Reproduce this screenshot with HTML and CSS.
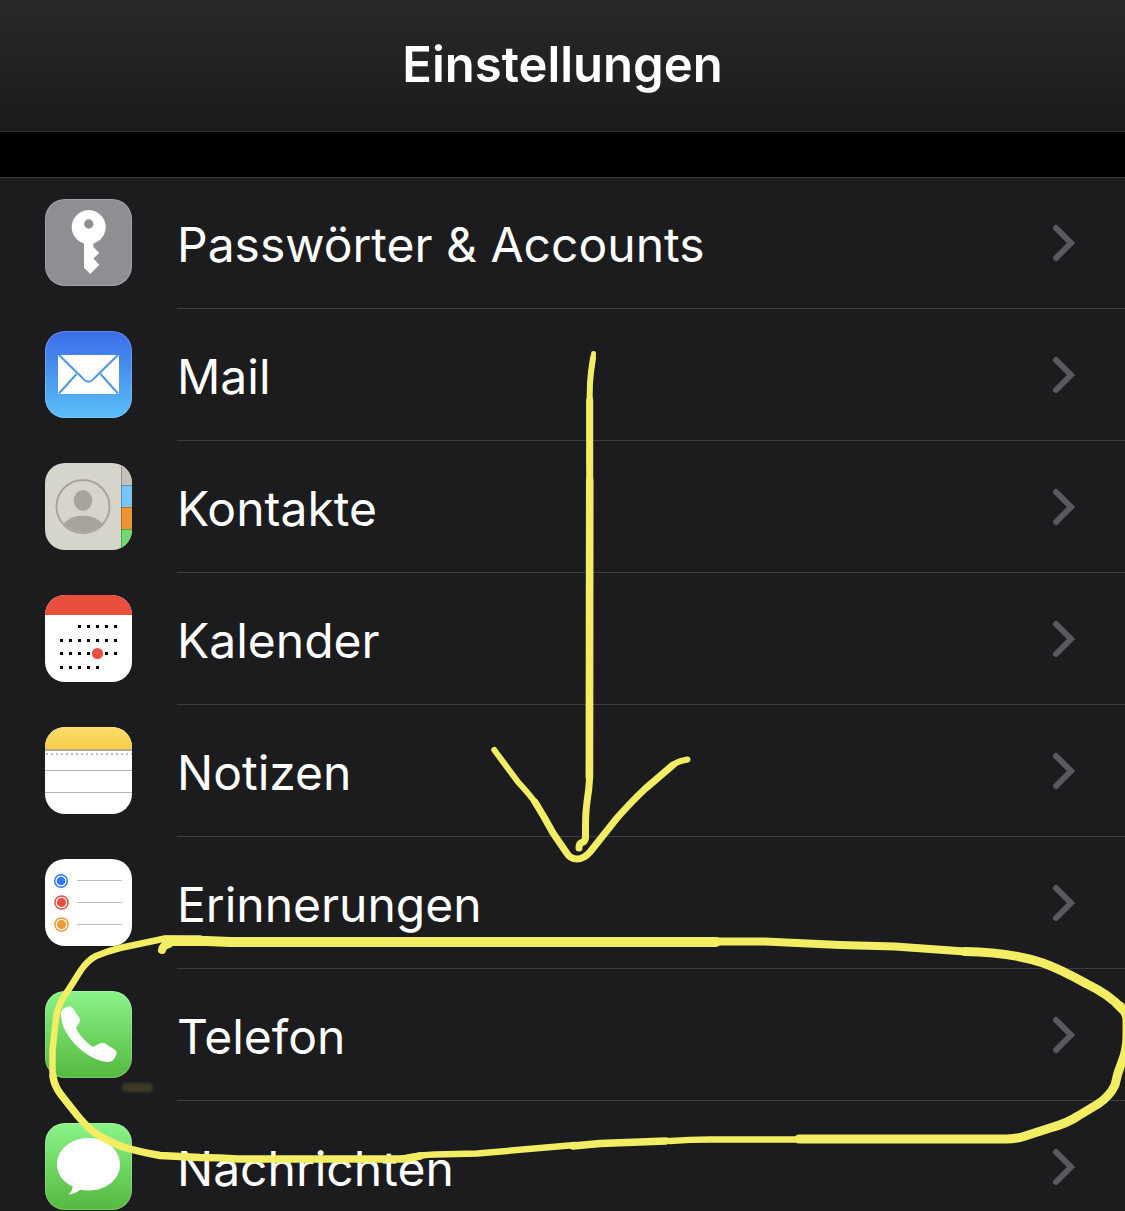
FILE: index.html
```html
<!DOCTYPE html>
<html lang="de">
<head>
<meta charset="utf-8">
<meta name="viewport" content="width=device-width, initial-scale=1">
<title>Einstellungen</title>
<link rel="stylesheet" href="styles.css">
</head>
<body>
<header class="navbar"><h1 class="navbar-title">Einstellungen</h1></header>
<main class="content">
<ul class="settings">
<li class="row"><a class="row-link" href="#passwoerter">
<svg class="app-icon icon-key" viewBox="0 0 87 87" aria-hidden="true"><path fill="#fff" fill-rule="evenodd" d="M39 44.400A17 17 0 1 1 48.4 44.400V48L54.3 54L48.4 59.5L54.3 65.7L45.3 75L39 68.7ZM43.8 20.3a4.7 4.7 0 1 0 0 9.4a4.7 4.7 0 1 0 0-9.4Z"/></svg>
<span class="row-body"><span class="label">Passwörter &amp; Accounts</span><svg class="chevron" viewBox="0 0 24 38" aria-hidden="true"><path d="M4 4L19 19L4 34"/></svg></span></a></li>
<li class="row"><a class="row-link" href="#mail">
<svg class="app-icon icon-mail" viewBox="0 0 87 87" aria-hidden="true"><rect x="13" y="24" width="61" height="39" rx="1" fill="#fff"/><path fill="none" stroke="#4d95e6" stroke-width="2" d="M14 24L37 46.500Q43.500 55 50 46.500L73 24M31.500 43L14 62.500M55.500 43L73 62.500"/></svg>
<span class="row-body"><span class="label">Mail</span><svg class="chevron" viewBox="0 0 24 38" aria-hidden="true"><path d="M4 4L19 19L4 34"/></svg></span></a></li>
<li class="row"><a class="row-link" href="#kontakte">
<svg class="app-icon icon-contacts" viewBox="0 0 87 87" aria-hidden="true"><rect x="76" width="11" height="22" fill="#c4c1b8"/><rect x="76" y="22" width="11" height="22" fill="#75c5f8"/><rect x="76" y="44" width="11" height="22" fill="#ee9433"/><rect x="76" y="66" width="11" height="21" fill="#72d872"/><path d="M76.500 0V87M76 22.500H87M76 44.500H87M76 66.500H87" stroke="#000" stroke-opacity=".25"/><circle cx="38" cy="43.500" r="26.500" fill="none" stroke="#a8a49d" stroke-width="2"/><ellipse cx="38" cy="37.500" rx="9.300" ry="10.400" fill="#a8a49d"/><path d="M18.500 60.500Q26 52.500 38 52.500T57.500 60.500A26.500 26.500 0 0 1 18.500 60.500Z" fill="#a8a49d"/></svg>
<span class="row-body"><span class="label">Kontakte</span><svg class="chevron" viewBox="0 0 24 38" aria-hidden="true"><path d="M4 4L19 19L4 34"/></svg></span></a></li>
<li class="row"><a class="row-link" href="#kalender">
<svg class="app-icon icon-calendar" viewBox="0 0 87 87" aria-hidden="true"><rect width="87" height="20" fill="#ea4e3d"/><path stroke="#000" stroke-width="3" stroke-dasharray="3 6" d="M33 31.500H72M15 45.500H72M15 58.500H72M15 72.500H54"/><circle cx="52.500" cy="58.500" r="5.600" fill="#ea4e3d"/></svg>
<span class="row-body"><span class="label">Kalender</span><svg class="chevron" viewBox="0 0 24 38" aria-hidden="true"><path d="M4 4L19 19L4 34"/></svg></span></a></li>
<li class="row"><a class="row-link" href="#notizen">
<svg class="app-icon icon-notes" viewBox="0 0 87 87" aria-hidden="true"><defs><linearGradient id="notes" x2="0" y2="1"><stop stop-color="#fbdc6c"/><stop offset="1" stop-color="#f6cd45"/></linearGradient></defs><rect width="87" height="22" fill="url(#notes)"/><path stroke="#b5aa8e" stroke-width="2" d="M0 23H87"/><path stroke="#bbb" stroke-width="2" stroke-dasharray="2 3" d="M1 27H87"/><path stroke="#b4b4b4" d="M0 43.500H87M0 65.500H87"/></svg>
<span class="row-body"><span class="label">Notizen</span><svg class="chevron" viewBox="0 0 24 38" aria-hidden="true"><path d="M4 4L19 19L4 34"/></svg></span></a></li>
<li class="row"><a class="row-link" href="#erinnerungen">
<svg class="app-icon icon-reminders" viewBox="0 0 87 87" aria-hidden="true"><g stroke-width="1.500"><circle cx="16" cy="22" r="6.300" fill="none" stroke="#3478f6"/><circle cx="16" cy="22" r="4.300" fill="#3478f6"/><circle cx="16.500" cy="43.500" r="6.600" fill="none" stroke="#e5503f"/><circle cx="16.500" cy="43.500" r="4.500" fill="#e5503f"/><circle cx="16.500" cy="65.500" r="6.600" fill="none" stroke="#ef9a37"/><circle cx="16.500" cy="65.500" r="4.500" fill="#ef9a37"/></g><path stroke="#c0c0c2" d="M32 21.500H77M32 43.500H77M32 65.500H77"/></svg>
<span class="row-body"><span class="label">Erinnerungen</span><svg class="chevron" viewBox="0 0 24 38" aria-hidden="true"><path d="M4 4L19 19L4 34"/></svg></span></a></li>
<li class="row"><a class="row-link" href="#telefon">
<svg class="app-icon icon-phone" viewBox="0 0 87 87" aria-hidden="true"><path fill="#fff" d="M16 23Q16 19 19.500 17L23 15.500Q26 14.500 28 17.500L34 26.500Q35.500 29 34.500 31L31.500 36Q31 37.500 31.800 39Q38 49 46.500 55Q48 56 49.500 55.300L55 52.300Q57.500 51 60 52.500L69.500 58.500Q72.500 60.500 71.500 63L69.500 67.500Q67 71 62 71Q51 70 38 60.500Q24 49 19 37Q16 30 16 23Z"/></svg>
<span class="row-body"><span class="label">Telefon</span><svg class="chevron" viewBox="0 0 24 38" aria-hidden="true"><path d="M4 4L19 19L4 34"/></svg></span></a></li>
<li class="row"><a class="row-link" href="#nachrichten">
<svg class="app-icon icon-messages" viewBox="0 0 87 87" aria-hidden="true"><path fill="#fff" d="M43.500 15C61 15 75 26.500 75 41.500S61 67.500 43.500 67.500Q39 67.500 35.500 66.500Q30 71 23.500 71.500Q27.500 67.500 27.800 63.500C18 59 12 51 12 41.500C12 26.500 26 15 43.500 15Z"/></svg>
<span class="row-body"><span class="label">Nachrichten</span><svg class="chevron" viewBox="0 0 24 38" aria-hidden="true"><path d="M4 4L19 19L4 34"/></svg></span></a></li>
</ul>
</main>
<!-- Hand-drawn marks: arrow down the list, loop round the Telefon row -->
<svg class="marker" viewBox="0 0 1125 1211" aria-hidden="true">
<rect class="smudge" x="122" y="1083" width="31" height="9" rx="4"/>
<g class="ink">
<path stroke-width="5" d="M593.500 353.500L591 372"/>
<path stroke-width="6" d="M593 358L591 372Q589.700 382 589.700 395V470"/>
<path stroke-width="7" d="M589.700 400V777Q589 790 587 802Q585.500 812 585.500 825V838Q585 842 581 843Q579 844 579 848"/>
<path stroke-width="7.500" d="M589.700 480L589.300 777"/>
<path stroke-width="6" d="M494.300 750L518 782Q531 796 537 805L553 833"/>
<path stroke-width="7" d="M535 802Q545 818 553 833L566 852Q570 859 577 859T590 852L617 818Q633 800 646 788L673 765"/>
<path stroke-width="6" d="M646 788L673 765Q677 762 681 761L687.500 759.500"/>
<path stroke-width="8" d="M162 950Q163 945 169 944"/>
<path stroke-width="8" d="M166 939.500L206 940.500"/>
<path stroke-width="10" d="M170 941H206L230 942H716"/>
<path stroke-width="8" d="M716 941.500H765Q800 943 840 945L895 946.500L965 951.500"/>
<path stroke-width="9" d="M965 951.500Q1010 952 1043 963Q1060 969 1087 984Q1110 995 1122 1009"/>
<path stroke-width="9" d="M1120 1006Q1127 1013 1127 1020V1035Q1127 1050 1122 1062T1115 1085Q1110 1096 1098 1104L1078 1116Q1068 1123 1050 1128L1022 1137Q1015 1139 1007 1139H799"/>
<path stroke-width="6.500" d="M800 1139.500H710Q690 1139.500 670 1141"/>
<path stroke-width="7.500" d="M666 1141L600 1143.500L573 1146"/>
<path stroke-width="6.500" d="M575 1145L477 1153.500L435 1154.500Q420 1155 408 1157.500"/>
<path stroke-width="7.500" d="M420 1156Q408 1159 398 1159H238Q220 1157.500 200 1157.500L160 1155.500Q145 1153 130 1149Q115 1145 100 1136Q90 1131 77 1115L62 1096Q54 1086 53 1076"/>
<path stroke-width="6.500" d="M77 1115L62 1096Q53 1086 52.500 1072V1050L56 1018Q58 1003 69 989L81 970Q88 960 96 956Q108 951 120 948L165 938.500H200"/>
</g>
</svg>
</body>
</html>
```
FILE: styles.css
```css
* { box-sizing: border-box; }

body {
  position: relative;
  display: flex;
  flex-direction: column;
  height: 100vh;
  margin: 0;
  overflow: hidden;
  background: #000;
  color: #fff;
  font-family: Inter, "Liberation Sans", sans-serif;
}

.navbar {
  display: flex;
  flex: none;
  align-items: center;
  justify-content: center;
  padding: 35px 16px 36px;
  border-bottom: 1px solid #2f2f31;
  background: linear-gradient(#29292b, #1b1b1b);
}

.navbar-title {
  margin: 0;
  font-size: 49px;
  font-weight: 600;
  line-height: 60px;
}

.content {
  flex: 1;
  min-height: 0;
  padding-top: 45px;
  overflow-y: auto;
  scrollbar-width: none;
}

.settings {
  margin: 0;
  padding: 0;
  list-style: none;
  background: #1c1c1e;
  box-shadow: inset 0 1px #3d3d40;
}

.row-link {
  display: flex;
  align-items: stretch;
  gap: 45px;
  padding-left: 45px;
  color: inherit;
  text-decoration: none;
}

.app-icon {
  flex: none;
  width: 87px;
  height: 87px;
  margin: 22px 0 23px;
  border-radius: 20px;
  background: #fff;
}

.icon-key { background: #8e8e93; }
.icon-mail { background: linear-gradient(#3a6ce8, #5ac0f8); }
.icon-contacts { background: #d6d5cc; }
.icon-phone,
.icon-messages { background: linear-gradient(#8af488, #54b93f); }

.icon-key,
.icon-mail,
.icon-phone,
.icon-messages { box-shadow: inset 0 0 0 1px rgba(255, 255, 255, 0.2); }

.row-body {
  display: flex;
  flex: 1;
  align-items: center;
  justify-content: space-between;
  min-width: 0;
  padding-top: 1px;
  padding-right: 49px;
  border-bottom: 1px solid #3d3d40;
}

.label {
  padding-top: 4px;
  font-size: 48px;
  line-height: 60px;
  white-space: nowrap;
}

.chevron {
  flex: none;
  width: 24px;
  height: 38px;
  fill: none;
  stroke: #5a5a5e;
  stroke-width: 6;
  stroke-linecap: round;
}

.marker {
  position: absolute;
  top: 0;
  left: 0;
  width: 100%;
  pointer-events: none;
}

.ink {
  fill: none;
  stroke: #f2ed63;
  stroke-linecap: round;
  stroke-linejoin: round;
}

.smudge {
  fill: #3c3928;
  filter: blur(1px);
}
```
